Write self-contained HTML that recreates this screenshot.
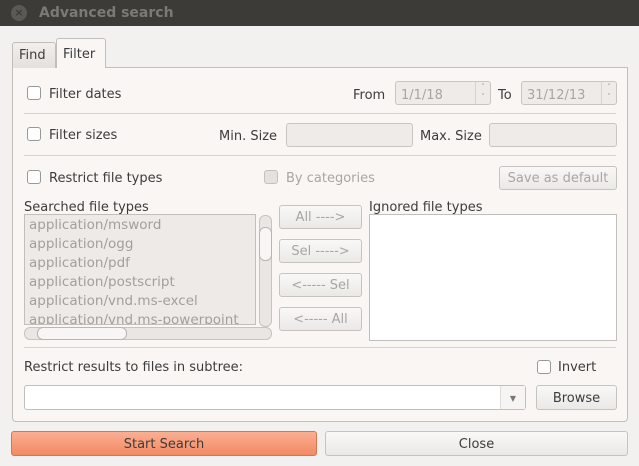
<!DOCTYPE html>
<html><head><style>
*{box-sizing:border-box;margin:0;padding:0}
body{width:639px;height:466px;background:#f2f1f0;font-family:"DejaVu Sans","Liberation Sans",sans-serif;font-size:13px;color:#3c3c3c;position:relative;overflow:hidden}
.a{position:absolute}
.t{position:absolute;white-space:nowrap;line-height:16px;margin-top:2px}
.cb{position:absolute;width:14px;height:14px;border:1px solid #9a9894;border-radius:3px;background:#fff}
.inp{position:absolute;border:1px solid #c9c5c1;border-radius:3px;background:#eeebe8}
.btn{position:absolute;border:1px solid #c7c3bf;border-radius:3px;background:linear-gradient(#f9f8f7,#ebe9e6);text-align:center;line-height:24px;color:#a8a6a3}
.sep{position:absolute;height:1px;background:#d6d2ce;left:24px;width:592px}
.dis{color:#a9a6a2}
</style></head><body>
<div class="a" style="left:0;top:0;width:639px;height:26px;background:#3c3b37"></div>
<div class="a" style="left:11px;top:5px;width:16px;height:16px;border-radius:50%;background:#5a5955;color:#3c3b37;font-size:11px;text-align:center;line-height:16px;font-weight:bold">×</div>
<div class="t" style="left:39px;top:3px;color:#7b7a75;font-weight:bold;font-size:14px">Advanced search</div>

<div class="a" style="left:12px;top:67px;width:616px;height:355px;background:#f9f6f4;border:1px solid #c2bfbb;border-radius:0 0 4px 4px"></div>
<div class="a" style="left:12px;top:42px;width:44px;height:26px;background:linear-gradient(#f2efec,#e4e0dc);border:1px solid #c2bfbb;border-bottom:none;border-radius:3px 3px 0 0"></div>
<div class="t" style="left:19px;top:46px">Find</div>
<div class="a" style="left:56px;top:38px;width:50px;height:30px;background:#f9f6f4;border:1px solid #c2bfbb;border-bottom:none;border-radius:3px 3px 0 0"></div>
<div class="t" style="left:63px;top:45px">Filter</div>

<div class="cb" style="left:27px;top:86px"></div>
<div class="t" style="left:49px;top:85px">Filter dates</div>
<div class="t" style="left:353px;top:86px">From</div>
<div class="inp" style="left:395px;top:81px;width:96px;height:24px"></div>
<div class="t dis" style="left:401px;top:86px">1/1/18</div>
<div class="a" style="left:475px;top:82px;width:15px;height:22px;border-left:1px solid #d6d2ce;color:#999;font-size:7px;text-align:center;line-height:10px">˄<br>˅</div>
<div class="t" style="left:498px;top:86px">To</div>
<div class="inp" style="left:521px;top:81px;width:96px;height:24px"></div>
<div class="t dis" style="left:527px;top:86px">31/12/13</div>
<div class="a" style="left:601px;top:82px;width:15px;height:22px;border-left:1px solid #d6d2ce;color:#999;font-size:7px;text-align:center;line-height:10px">˄<br>˅</div>
<div class="sep" style="top:113px"></div>

<div class="cb" style="left:27px;top:127px"></div>
<div class="t" style="left:49px;top:126px">Filter sizes</div>
<div class="t" style="left:219px;top:127px">Min. Size</div>
<div class="inp" style="left:286px;top:123px;width:127px;height:24px"></div>
<div class="t" style="left:420px;top:127px">Max. Size</div>
<div class="inp" style="left:489px;top:123px;width:128px;height:24px"></div>
<div class="sep" style="top:155px"></div>

<div class="cb" style="left:27px;top:170px"></div>
<div class="t" style="left:49px;top:169px">Restrict file types</div>
<div class="cb" style="left:264px;top:170px;background:#e4e1de;border-color:#c4c1bd"></div>
<div class="t dis" style="left:286px;top:169px">By categories</div>
<div class="btn" style="left:499px;top:166px;width:118px;height:24px">Save as default</div>

<div class="t" style="left:24px;top:198px">Searched file types</div>
<div class="a" style="left:24px;top:214px;width:232px;height:111px;background:#edeae7;border:1px solid #c2bfbb;overflow:hidden;color:#a3a09c;font-size:13.5px;line-height:19px;padding:1px 0 0 4px">application/msword<br>application/ogg<br>application/pdf<br>application/postscript<br>application/vnd.ms-excel<br>application/vnd.ms-powerpoint</div>
<div class="a" style="left:259px;top:215px;width:13px;height:112px;border:1px solid #c7c3bf;border-radius:6px;background:#e9e6e3"></div>
<div class="a" style="left:259px;top:227px;width:13px;height:34px;border:1px solid #b9b5b1;border-radius:6px;background:#f7f6f5"></div>
<div class="a" style="left:24px;top:327px;width:248px;height:13px;border:1px solid #c7c3bf;border-radius:6px;background:#e9e6e3"></div>
<div class="a" style="left:37px;top:327px;width:90px;height:13px;border:1px solid #b9b5b1;border-radius:6px;background:#f7f6f5"></div>

<div class="btn" style="left:279px;top:205px;width:83px;height:24px">All ----&gt;</div>
<div class="btn" style="left:279px;top:239px;width:83px;height:24px">Sel -----&gt;</div>
<div class="btn" style="left:279px;top:273px;width:83px;height:24px">&lt;----- Sel</div>
<div class="btn" style="left:279px;top:307px;width:83px;height:24px">&lt;----- All</div>

<div class="t" style="left:369px;top:198px">Ignored file types</div>
<div class="a" style="left:369px;top:214px;width:248px;height:127px;background:#fff;border:1px solid #c2bfbb"></div>
<div class="sep" style="top:347px"></div>

<div class="t" style="left:24px;top:358px">Restrict results to files in subtree:</div>
<div class="cb" style="left:537px;top:360px"></div>
<div class="t" style="left:558px;top:358px">Invert</div>
<div class="a" style="left:24px;top:385px;width:502px;height:25px;background:#fff;border:1px solid #c2bfbb;border-radius:3px"></div>
<div class="a" style="left:500px;top:386px;width:25px;height:23px;border-left:1px solid #ddd;background:#f6f5f4;color:#777;font-size:8px;text-align:center;line-height:25px">▼</div>
<div class="btn" style="left:536px;top:385px;width:81px;height:25px;color:#3c3c3c;line-height:25px">Browse</div>

<div class="a" style="left:11px;top:431px;width:306px;height:25px;border:1px solid #d9744f;border-radius:3px;background:linear-gradient(#fbae92,#f38a63);text-align:center;line-height:25px">Start Search</div>
<div class="btn" style="left:325px;top:431px;width:303px;height:25px;color:#3c3c3c;line-height:25px">Close</div>
</body></html>
